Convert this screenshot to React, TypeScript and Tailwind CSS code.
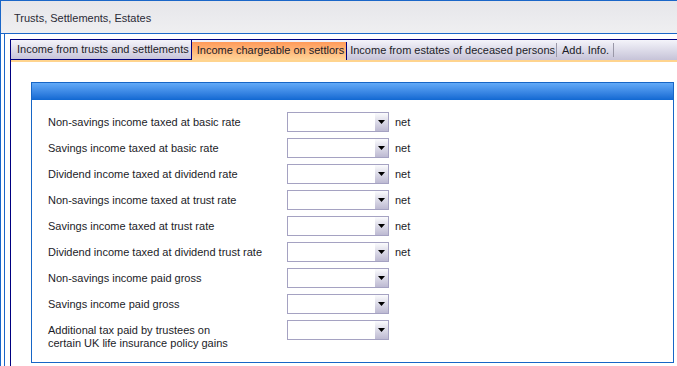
import React from "react";

const rows: { label: string[]; net: boolean }[] = [
  { label: ["Non-savings income taxed at basic rate"], net: true },
  { label: ["Savings income taxed at basic rate"], net: true },
  { label: ["Dividend income taxed at dividend rate"], net: true },
  { label: ["Non-savings income taxed at trust rate"], net: true },
  { label: ["Savings income taxed at trust rate"], net: true },
  { label: ["Dividend income taxed at dividend trust rate"], net: true },
  { label: ["Non-savings income paid gross"], net: false },
  { label: ["Savings income paid gross"], net: false },
  { label: ["Additional tax paid by trustees on", "certain UK life insurance policy gains"], net: false },
];

function Dropdown() {
  return (
    <div className="flex h-[20px] w-[102px] border border-[#a5a2c2] bg-white">
      <div className="flex-1" />
      <div className="flex w-[13px] items-center justify-center bg-gradient-to-b from-[#fbfbfd] to-[#bdbad2]">
        <svg width="7" height="4" viewBox="0 0 7 4">
          <polygon points="0,0 7,0 3.5,4" fill="#000" />
        </svg>
      </div>
    </div>
  );
}

export default function App() {
  return (
    <div
      className="relative h-[366px] w-[677px] overflow-hidden border-l border-t border-[#1a66c8] bg-white text-[11px] text-[#1c1c28]"
      style={{ fontFamily: '"Liberation Sans", Arial, sans-serif' }}
    >
      {/* header */}
      <div className="flex h-[33px] items-center border-b border-[#1a66c8] bg-gradient-to-b from-[#e6e6ea] to-[#efeff1] pl-[13px] text-[11px] text-[#2a2a36]">
        <div className="pt-[3px]">Trusts, Settlements, Estates</div>
      </div>
      {/* body */}
      <div className="ml-[3px] flex h-full border-l border-[#1a66c8] bg-white pl-[5px] pt-[5px]">
        {/* tab control */}
        <div className="flex h-full flex-1 flex-col border-l border-t border-[#000080]">
          {/* tab strip */}
          <div className="flex h-[20px] bg-gradient-to-b from-[#f4f4fa] to-[#c6c3d8] text-[#1c1c28]">
            <div className="flex items-center border-b border-r border-[#000080] pl-[6px] pr-[2px]">
              Income from trusts and settlements
            </div>
            <div className="mt-[2px] flex items-center border-r border-[#000080] bg-gradient-to-b from-[#ff9a5a] to-[#ffd498] pl-[5px] pr-[2px] pb-[1px]">
              Income chargeable on settlors
            </div>
            <div className="flex items-center pl-[3px] pr-[1px]">
              Income from estates of deceased persons
            </div>
            <div className="my-[3px] w-px bg-[#9a98a8]" />
            <div className="flex items-center pl-[5px] pr-[4px]">Add. Info.</div>
            <div className="my-[3px] w-px bg-[#9a98a8]" />
            <div className="flex-1" />
          </div>
          <div className="h-[2px] bg-[#ffd48e]" />
          {/* content */}
          <div className="pl-[20px] pt-[20px]">
            <div className="mr-[3px] h-[281px] border border-[#1766c6]">
              <div className="h-[17px] bg-gradient-to-b from-[#62aaf8] to-[#1068d2]" />
              <div className="flex flex-col gap-[6px] pl-[16px] pt-[12px]">
                {rows.map((r, i) => (
                  <div key={i} className="flex items-start">
                    <div className="w-[239px] pt-[4px] leading-[13px]">
                      {r.label.map((l, j) => (
                        <div key={j}>{l}</div>
                      ))}
                    </div>
                    <Dropdown />
                    {r.net && <div className="ml-[6px] pt-[4px] leading-[13px]">net</div>}
                  </div>
                ))}
              </div>
            </div>
          </div>
        </div>
      </div>
    </div>
  );
}
